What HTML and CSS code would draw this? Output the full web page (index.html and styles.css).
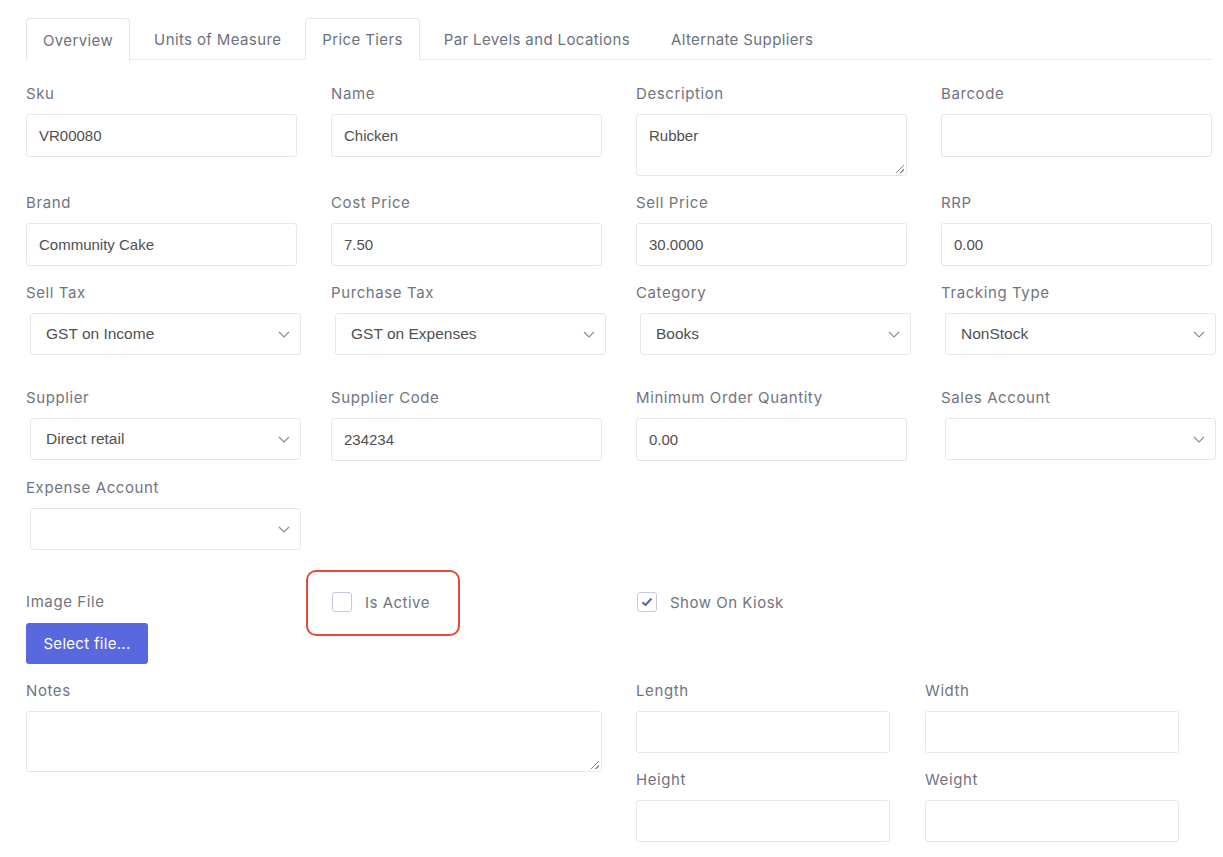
FILE: index.html
```html
<!DOCTYPE html>
<html>
<head>
<meta charset="utf-8">
<link rel="stylesheet" href="styles.css">
</head>
<body>
<div class="page">
  <ul class="tabs">
    <li class="tab active">Overview</li>
    <li class="tab">Units of Measure</li>
    <li class="tab bordered">Price Tiers</li>
    <li class="tab">Par Levels and Locations</li>
    <li class="tab">Alternate Suppliers</li>
  </ul>

  <div class="grid">
    <div class="field"><label class="lbl">Sku</label><div class="input">VR00080</div></div>
    <div class="field"><label class="lbl">Name</label><div class="input">Chicken</div></div>
    <div class="field"><label class="lbl">Description</label><div class="input textarea">Rubber<span class="grip"></span></div></div>
    <div class="field"><label class="lbl">Barcode</label><div class="input"></div></div>

    <div class="field"><label class="lbl">Brand</label><div class="input">Community Cake</div></div>
    <div class="field"><label class="lbl">Cost Price</label><div class="input">7.50</div></div>
    <div class="field"><label class="lbl">Sell Price</label><div class="input">30.0000</div></div>
    <div class="field"><label class="lbl">RRP</label><div class="input">0.00</div></div>

    <div class="field sel-field"><label class="lbl">Sell Tax</label><div class="select">GST on Income<svg class="chev" viewBox="0 0 12 7"><path d="M1 1l5 5 5-5"/></svg></div></div>
    <div class="field sel-field"><label class="lbl">Purchase Tax</label><div class="select">GST on Expenses<svg class="chev" viewBox="0 0 12 7"><path d="M1 1l5 5 5-5"/></svg></div></div>
    <div class="field sel-field"><label class="lbl">Category</label><div class="select">Books<svg class="chev" viewBox="0 0 12 7"><path d="M1 1l5 5 5-5"/></svg></div></div>
    <div class="field sel-field"><label class="lbl">Tracking Type</label><div class="select">NonStock<svg class="chev" viewBox="0 0 12 7"><path d="M1 1l5 5 5-5"/></svg></div></div>

    <div class="field"><label class="lbl">Supplier</label><div class="select">Direct retail<svg class="chev" viewBox="0 0 12 7"><path d="M1 1l5 5 5-5"/></svg></div></div>
    <div class="field"><label class="lbl">Supplier Code</label><div class="input">234234</div></div>
    <div class="field"><label class="lbl">Minimum Order Quantity</label><div class="input">0.00</div></div>
    <div class="field"><label class="lbl">Sales Account</label><div class="select"><svg class="chev" viewBox="0 0 12 7"><path d="M1 1l5 5 5-5"/></svg></div></div>

    <div class="field"><label class="lbl">Expense Account</label><div class="select"><svg class="chev" viewBox="0 0 12 7"><path d="M1 1l5 5 5-5"/></svg></div></div>
  </div>

  <div class="grid row-files">
    <div class="field">
      <label class="lbl">Image File</label>
      <button class="btn">Select file...</button>
    </div>
    <div class="check-field highlight">
      <span class="box"></span><span class="check-lbl">Is Active</span>
    </div>
    <div class="check-field">
      <span class="box checked"><svg viewBox="0 0 12 10"><path d="M1.5 5.2l3 2.8 6-6.5"/></svg></span><span class="check-lbl">Show On Kiosk</span>
    </div>
  </div>

  <div class="bottom">
    <div class="field notes"><label class="lbl">Notes</label><div class="input textarea notes-area"><span class="grip"></span></div></div>
    <div class="dims">
      <div class="field"><label class="lbl">Length</label><div class="input"></div></div>
      <div class="field"><label class="lbl">Width</label><div class="input"></div></div>
      <div class="field"><label class="lbl">Height</label><div class="input"></div></div>
      <div class="field"><label class="lbl">Weight</label><div class="input"></div></div>
    </div>
  </div>
</div>
</body>
</html>
```

FILE: styles.css
```css
* { box-sizing: border-box; }
html, body { margin: 0; background: #fff; }
body { font-family: Inter, "Open Sans", sans-serif; color: #6d707c; }
.page { padding: 18px 11px 0 26px; width: 1223px; }

.tabs {
  list-style: none; margin: 0; padding: 0;
  display: flex; gap: 7px;
  border-bottom: 1px solid #e8e9ef;
  height: 42px;
}
.tab {
  height: 42px; padding: 0 16px;
  display: flex; align-items: center;
  font-size: 15px; color: #6d707e;
  border: 1px solid transparent; border-bottom: none;
  border-radius: 4px 4px 0 0;
  letter-spacing: 0.38px;
}
.tab.active, .tab.bordered {
  border-color: #e4e5ec;
  background: #fff;
}
.tab.active { height: 43px; }

.grid {
  display: grid;
  grid-template-columns: repeat(4, 271px);
  column-gap: 34px;
  row-gap: 16px;
  margin-top: 23px;
}
.field { display: flex; flex-direction: column; align-items: flex-start; }
.lbl {
  font-size: 15px; line-height: 22px; height: 22px; white-space: nowrap;
  margin-bottom: 9px; color: #71747f; letter-spacing: 0.6px;
}
.input {
  width: 271px; height: 43px;
  border: 1px solid #e5e6ee; border-radius: 3px;
  padding: 0 12px;
  display: flex; align-items: center;
  font-family: "Liberation Sans", Arial, sans-serif;
  font-size: 15px; color: #505050;
  position: relative;
}
.textarea { height: 62px; align-items: flex-start; padding-top: 12px; }
.grip {
  position: absolute; right: 2px; bottom: 2px; width: 8px; height: 8px;
  background:
    linear-gradient(135deg, transparent 45%, #8a8a8a 45%, #8a8a8a 55%, transparent 55%),
    linear-gradient(135deg, transparent 75%, #8a8a8a 75%, #8a8a8a 85%, transparent 85%);
}
.select {
  width: 271px; height: 42px; margin-left: 4px;
  border: 1px solid #e5e6ee; border-radius: 3px;
  padding: 0 15px;
  display: flex; align-items: center;
  font-family: "Liberation Sans", Arial, sans-serif;
  font-size: 15.5px; color: #505050;
  position: relative;
}
.sel-field { margin-bottom: 16px; }
.chev {
  position: absolute; right: 10px; top: 17px;
  width: 12px; height: 7px;
  fill: none; stroke: #8b8d94; stroke-width: 1.2;
}

.row-files { margin-top: 41px; row-gap: 0; }
.row-files .lbl { margin-bottom: 10px; }
.btn {
  width: 122px; height: 41px;
  background: #5a68e0; color: #fff; border: none; border-radius: 3px;
  font-family: Inter, "Open Sans", sans-serif; font-size: 15px; letter-spacing: 0.3px;
  padding: 0;
}
.check-field {
  display: flex; align-items: center; height: 22px;
  position: relative;
}
.box {
  width: 20px; height: 20px;
  border: 1px solid #c4c9df; border-radius: 3px;
  display: flex; align-items: center; justify-content: center;
  margin-right: 13px; margin-left: 1px;
}
.box svg { width: 12px; height: 10px; fill: none; stroke: #5467a6; stroke-width: 2; }
.check-lbl { font-size: 15px; color: #71747f; letter-spacing: 0.5px; }
.highlight::after {
  content: ""; position: absolute;
  left: -25px; top: -21px; width: 150px; height: 62px;
  border: 2.5px solid #e14c3b; border-radius: 10px;
}

.bottom { display: flex; margin-top: 16px; gap: 34px; }
.notes .input, .notes-area { width: 576px; height: 61px; }
.dims {
  display: grid; grid-template-columns: 254px 254px; column-gap: 35px; row-gap: 16px;
}
.dims .input { width: 254px; height: 42px; }
```
